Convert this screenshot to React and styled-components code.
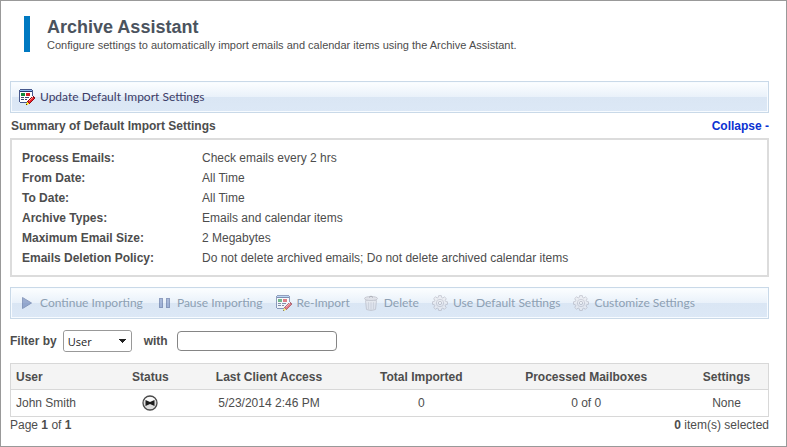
import React from "react";
import styled, { createGlobalStyle } from "styled-components";

const GlobalStyle = createGlobalStyle`
    *, *::before, *::after {
        box-sizing: border-box;
    }
    body {
        margin: 0;
        background-color: white;
        color: #4d4d4d;
        font-family: "Liberation Sans", Arial, sans-serif;
        font-size: 12px;
        line-height: 16px;
    }
`;

const Page = styled.main`
    border: 1px solid #999;
    padding: 15px 17px 13px 9px;
`;

const Header = styled.header`
    margin: 0 0 29px 14px;
    padding-left: 17px;
    border-left: 6px solid #0079c1;
    height: 36px;
`;

const Title = styled.h1`
    margin: 0;
    color: #4b535e;
    font-size: 18px;
    font-weight: bold;
    line-height: 22px;
`;

const Subtitle = styled.p`
    margin: 0;
    font-size: 11px;
    line-height: 14px;
`;

const Toolbar = styled.div`
    display: flex;
    align-items: center;
    gap: 13px;
    height: 32px;
    padding: 0 8px;
    border: 1px solid #c9d9e8;
    box-shadow: inset 0 0 0 1px #f7fbff;
    background: linear-gradient(#fcfeff 0%, #e9f1fa 50%, #dae6f4 50%, #dce8f6 100%);
`;

const ToolButton = styled.button`
    display: flex;
    align-items: center;
    gap: 5px;
    padding: 0;
    border: 0;
    background: none;
    color: #3b3b66;
    font-family: Lato, "Noto Sans", sans-serif;
    font-size: 12px;
    line-height: 16px;
    white-space: nowrap;

    &:disabled {
        color: #8da0b3;
    }
    &:disabled svg {
        opacity: 0.55;
    }
`;

const SummaryBar = styled.div`
    display: flex;
    justify-content: space-between;
    align-items: center;
    height: 25px;
    font-weight: bold;
`;

const SummaryTitle = styled.h2`
    margin: 0 0 0 1px;
    font-size: 12px;
`;

const CollapseLink = styled.a`
    color: #0a32d2;
    text-decoration: none;
`;

const Summary = styled.dl`
    display: grid;
    grid-template-columns: 180px 1fr;
    grid-auto-rows: 20px;
    align-items: center;
    margin: 0 0 10px;
    padding: 8px 10px 7px;
    border: 2px solid #dcdcdc;
`;

const Term = styled.dt`
    font-weight: bold;
`;

const Value = styled.dd`
    margin: 0;
`;

const Filter = styled.form`
    display: flex;
    align-items: center;
    height: 22px;
    margin: 11px 0;
`;

const FilterLabel = styled.label`
    font-weight: bold;
`;

const SelectBox = styled.div`
    display: flex;
    align-items: center;
    width: 69px;
    margin: 0 12px 0 6px;
    border: 1px solid #999;
    border-radius: 3px;
`;

const Select = styled.select`
    flex: 1;
    width: 100%;
    height: 20px;
    padding: 0 4px;
    border: 0;
    border-radius: 3px;
    appearance: none;
    color: #222;
    font-family: "Open Sans", "Noto Sans", sans-serif;
    font-size: 11px;
    background: linear-gradient(#222, #222) no-repeat right 5px top 8px / 7px 1px,
        linear-gradient(#222, #222) no-repeat right 6px top 9px / 5px 1px,
        linear-gradient(#222, #222) no-repeat right 7px top 10px / 3px 1px,
        linear-gradient(#222, #222) no-repeat right 8px top 11px / 1px 1px,
        white;
`;

const FilterInput = styled.input`
    width: 160px;
    height: 20px;
    margin-left: 9px;
    padding: 0 4px;
    border: 1px solid #858585;
    border-radius: 4px;
    font: inherit;
`;

const Table = styled.table`
    width: 100%;
    table-layout: fixed;
    border: 1px solid #d8d8d8;
    border-collapse: collapse;
`;

const Th = styled.th`
    width: ${props => props.$width};
    height: 26px;
    padding: 0 5px;
    border-bottom: 1px solid #d8d8d8;
    background-color: #f4f4f4;
    text-align: ${props => props.$align || "center"};
`;

const Td = styled.td`
    height: 27px;
    padding: 0 5px;
    text-align: ${props => props.$align || "center"};

    svg {
        display: block;
        margin: 0 auto;
    }
`;

const Footer = styled.footer`
    display: flex;
    justify-content: space-between;
`;

const Icon = ({ children, crisp }) => (
    <svg
        width="16"
        height="16"
        viewBox="0 0 16 16"
        aria-hidden="true"
        shapeRendering={crisp ? "crispEdges" : "auto"}
    >
        {children}
    </svg>
);

const FormIcon = () => (
    <Icon crisp>
        <path fill="#46588c" d="M1 0h12v1H1zM0 1h1v12H0zM13 1h1v6h-1zM1 13h7v1H1z" />
        <path fill="#fff" d="M1 3h12v10H1z" />
        <path fill="#8fbdf0" d="M1 1h12v1H1z" />
        <path fill="#23386f" d="M1 2h12v1H1z" />
        <path fill="#118a36" d="M2 4h4v3H2z" />
        <path fill="#d42027" d="M7 4h4v3H7z" />
        <path fill="#39456b" d="M2 8h3v1H2zM6 8h4v1H6zM2 10h3v1H2zM6 10h2v1H6z" />
        <path fill="#8a0d16" d="M14 7h1v1h1v2h-1v1h-1v1h-1v1h-1v1h-1v1h-1v-1H9v-1H8v-1h1v-1h1v-1h1V9h1V8h2z" />
        <path fill="#f0222b" d="M13 8h1v1h1v1h-1v1h-1v1h-1v1h-1v1h-1v-1H9v-1h1v-1h1v-1h1V9h1z" />
        <path fill="#ff8d80" d="M13 8h1v1h-1zM12 9h1v1h-1zM11 10h1v1h-1zM10 11h1v1h-1z" />
        <path fill="#ffe32e" d="M8 13h1v1h1v1H9v1H7v-2h1z" />
        <path fill="#44320b" d="M7 15h1v1H7z" />
    </Icon>
);

const PlayIcon = () => (
    <Icon>
        <path d="M3.5 2.5v11l9-5.5z" fill="#5873ae" stroke="#41588f" />
    </Icon>
);

const PauseIcon = () => (
    <Icon crisp>
        <path d="M3 3h4v10H3zM10 3h4v10h-4z" fill="#41588f" />
        <path d="M4 4h2v8H4zM11 4h2v8h-2z" fill="#7189bf" />
    </Icon>
);

const TrashIcon = () => (
    <Icon>
        <path d="M2.5 5.5l1 9q4.5 2 9 0l1-9z" fill="#e0e0e6" stroke="#b0b0ba" />
        <path d="M5.5 7v7M8 7v8M10.5 7v7" stroke="#c2c2cb" fill="none" />
        <ellipse cx="8" cy="3.5" rx="6.5" ry="2" fill="#d4d4db" stroke="#a8a8b3" />
        <path d="M6 2.5q2-3 4 0" fill="none" stroke="#777783" />
    </Icon>
);

const GearIcon = () => (
    <Icon>
        <path
            d="M6.7.6h2.6l.4 1.900 1.100.5 1.700-1.100 1.800 1.800-1.100 1.600.5 1.200 1.800.3v2.500l-1.900.4-.5 1.200 1.100 1.600-1.800 1.800-1.600-1.100-1.200.5-.3 1.800H6.700l-.4-1.900-1.100-.5-1.700 1.100-1.800-1.800 1.100-1.600-.5-1.100-1.800-.4V6.800l1.900-.4.4-1.100-1.100-1.700 1.800-1.800 1.700 1.100 1.100-.5z"
            fill="#e9e9ee"
            stroke="#a6a6b2"
            strokeWidth="0.9"
        />
        <circle cx="8" cy="8" r="3.7" fill="none" stroke="#b4b4c0" />
        <circle cx="8" cy="8" r="1.6" fill="#fff" stroke="#a3a3b0" />
    </Icon>
);

const StatusIcon = () => (
    <svg width="16" height="16" viewBox="0 0 16 16" role="img" aria-label="Waiting">
        <circle cx="8" cy="8" r="7" fill="#dedede" stroke="#4a4a4a" strokeWidth="1.3" />
        <ellipse cx="8" cy="5" rx="5" ry="3" fill="#fafafa" />
        <path d="M3.5 5l4.5 2 4.5-2v6L8 9l-4.500 2z" fill="#1c1c1c" />
    </svg>
);

const settings = [
    ["Process Emails:", "Check emails every 2 hrs"],
    ["From Date:", "All Time"],
    ["To Date:", "All Time"],
    ["Archive Types:", "Emails and calendar items"],
    ["Maximum Email Size:", "2 Megabytes"],
    ["Emails Deletion Policy:", "Do not delete archived emails; Do not delete archived calendar items"],
];

const actions = [
    ["Continue Importing", PlayIcon],
    ["Pause Importing", PauseIcon],
    ["Re-Import", FormIcon],
    ["Delete", TrashIcon],
    ["Use Default Settings", GearIcon],
    ["Customize Settings", GearIcon],
];

const App = () => {
    return (
        <Page>
            <GlobalStyle />
            <Header>
                <Title>Archive Assistant</Title>
                <Subtitle>
                    Configure settings to automatically import emails and calendar items using the Archive Assistant.
                </Subtitle>
            </Header>

            <Toolbar>
                <ToolButton type="button">
                    <FormIcon />
                    Update Default Import Settings
                </ToolButton>
            </Toolbar>

            <SummaryBar>
                <SummaryTitle>Summary of Default Import Settings</SummaryTitle>
                <CollapseLink href="#summary">Collapse -</CollapseLink>
            </SummaryBar>
            <Summary id="summary">
                {settings.map(([name, value]) => (
                    <React.Fragment key={name}>
                        <Term>{name}</Term>
                        <Value>{value}</Value>
                    </React.Fragment>
                ))}
            </Summary>

            <Toolbar>
                {actions.map(([label, ActionIcon]) => (
                    <ToolButton type="button" key={label} disabled>
                        <ActionIcon />
                        {label}
                    </ToolButton>
                ))}
            </Toolbar>

            <Filter>
                <FilterLabel htmlFor="filter-field">Filter by</FilterLabel>
                <SelectBox>
                    <Select id="filter-field" defaultValue="User">
                        <option>User</option>
                        <option>Status</option>
                    </Select>
                </SelectBox>
                <FilterLabel htmlFor="filter-text">with</FilterLabel>
                <FilterInput id="filter-text" type="text" />
            </Filter>

            <Table>
                <thead>
                    <tr>
                        <Th $width="14.2%" $align="left">User</Th>
                        <Th $width="8.5%">Status</Th>
                        <Th $width="22.8%">Last Client Access</Th>
                        <Th $width="17.4%">Total Imported</Th>
                        <Th $width="26.1%">Processed Mailboxes</Th>
                        <Th $width="11%">Settings</Th>
                    </tr>
                </thead>
                <tbody>
                    <tr>
                        <Td $align="left">John Smith</Td>
                        <Td><StatusIcon /></Td>
                        <Td>5/23/2014 2:46 PM</Td>
                        <Td>0</Td>
                        <Td>0 of 0</Td>
                        <Td>None</Td>
                    </tr>
                </tbody>
            </Table>
            <Footer>
                <span>Page <b>1</b> of <b>1</b></span>
                <span><b>0</b> item(s) selected</span>
            </Footer>
        </Page>
    );
};

export default App;
